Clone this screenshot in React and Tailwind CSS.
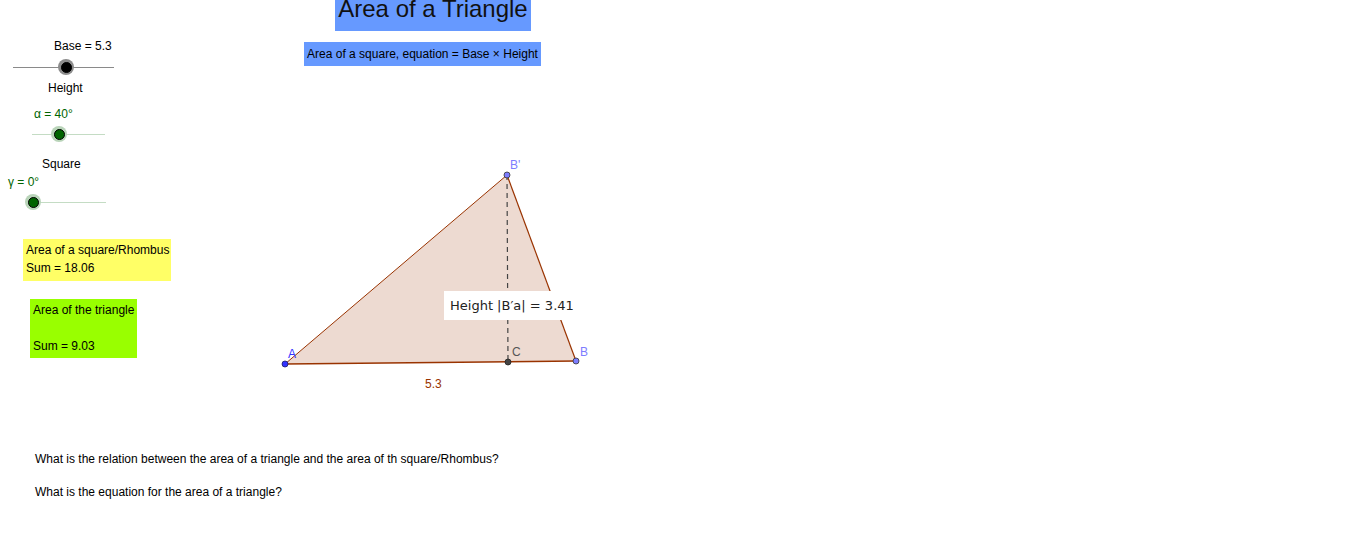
import React from 'react';

const sans = { fontFamily: '"Liberation Sans", Arial, sans-serif' };

function Slider({ x, y, width, knob, color, halo, line }) {
  return (
    <div className="absolute" style={{ left: x, top: y - 8, width, height: 16 }}>
      <div className={`absolute left-0 right-0 top-[7.5px] h-px ${line}`} />
      <div
        className={`absolute top-0 w-4 h-4 rounded-full ${halo} flex items-center justify-center`}
        style={{ left: knob - x - 8 }}
      >
        <div className={`w-[11px] h-[11px] rounded-full border border-black ${color}`} />
      </div>
    </div>
  );
}

function Label({ x, y, children, className = '' }) {
  return (
    <div className={`absolute whitespace-nowrap text-[12px] leading-none ${className}`} style={{ left: x, top: y - 6 }}>
      {children}
    </div>
  );
}

export default function App() {
  return (
    <div className="relative w-[1366px] h-[558px] bg-white overflow-hidden text-black" style={sans}>
      {/* Title */}
      <div className="absolute left-[335px] top-0 w-[196px] h-[31px] bg-[#6699ff] flex items-end justify-center pb-[10px]">
        <span className="text-[24px] leading-none text-[#111]">Area of a Triangle</span>
      </div>
      <div className="absolute left-[304px] top-[42px] w-[237px] h-[24px] bg-[#6699ff] flex items-center justify-center">
        <span className="text-[12px] leading-none">Area of a square, equation = Base × Height</span>
      </div>

      {/* Sliders */}
      <Label x={54} y={46}>Base = 5.3</Label>
      <Slider x={13} y={67} width={101} knob={66} color="bg-black" halo="bg-[#8c8c8c]" line="bg-[#8a8a8a]" />
      <Label x={48} y={88}>Height</Label>
      <Label x={34} y={114} className="text-[#006400]">α = 40°</Label>
      <Slider x={32} y={134} width={73} knob={59} color="bg-[#006400]" halo="bg-[#b9d4b9]" line="bg-[#c4dcc4]" />
      <Label x={42} y={164}>Square</Label>
      <Label x={8} y={182} className="text-[#006400]">γ = 0°</Label>
      <Slider x={33} y={202} width={73} knob={33} color="bg-[#006400]" halo="bg-[#b9d4b9]" line="bg-[#c4dcc4]" />

      {/* Info boxes */}
      <div className="absolute left-[23px] top-[239px] w-[148px] h-[42px] bg-[#ffff66] px-[3px] pt-[2px] text-[12px] leading-[18px] whitespace-nowrap">
        <div>Area of a square/Rhombus</div>
        <div>Sum = 18.06</div>
      </div>
      <div className="absolute left-[30px] top-[299px] w-[107px] h-[59px] bg-[#99ff00] px-[3px] pt-[2px] text-[12px] leading-[18px] whitespace-nowrap">
        <div>Area of the triangle</div>
        <div className="mt-[18px]">Sum = 9.03</div>
      </div>

      {/* Triangle */}
      <svg className="absolute left-0 top-0" width="1366" height="558">
        <polygon points="285,364 576,361 507,175" fill="#993300" fillOpacity="0.18" stroke="none" />
        <line x1="285" y1="364" x2="507" y2="175" stroke="#993300" strokeWidth="1" />
        <line x1="507" y1="175" x2="576" y2="361" stroke="#993300" strokeWidth="1.2" />
        <line x1="285" y1="364" x2="576" y2="361" stroke="#993300" strokeWidth="1.5" />
        <line x1="507" y1="175" x2="508" y2="362" stroke="#444" strokeWidth="1.2" strokeDasharray="5,4" />
        <circle cx="285" cy="364" r="3" fill="#3333ff" stroke="#1a1a66" strokeWidth="0.8" />
        <circle cx="576" cy="361" r="3" fill="#7d7dff" stroke="#333" strokeWidth="0.8" />
        <circle cx="507" cy="175" r="3" fill="#7d7dff" stroke="#333" strokeWidth="0.8" />
        <circle cx="508" cy="362" r="3" fill="#444" stroke="#222" strokeWidth="0.8" />
      </svg>
      <Label x={288} y={354} className="text-[#3333ff]">A</Label>
      <Label x={580} y={352} className="text-[#7d7dff]">B</Label>
      <Label x={510} y={165} className="text-[#7d7dff]">B'</Label>
      <Label x={512} y={352} className="text-[#555]">C</Label>
      <Label x={425} y={384} className="text-[#993300]">5.3</Label>

      <div className="absolute left-[444px] top-[291px] w-[129px] h-[29px] bg-white flex items-center pl-[6px]">
        <span
          className="whitespace-nowrap leading-none text-[#222] text-[13px]"
          style={{ fontFamily: '"DejaVu Sans", sans-serif' }}
        >
          Height |B′a| = 3.41
        </span>
      </div>

      {/* Questions */}
      <div className="absolute left-[35px] top-[453px] flex flex-col gap-[21px] text-[12px] leading-[12px]">
        <p>What is the relation between the area of a triangle and the area of th square/Rhombus?</p>
        <p>What is the equation for the area of a triangle?</p>
      </div>
    </div>
  );
}
